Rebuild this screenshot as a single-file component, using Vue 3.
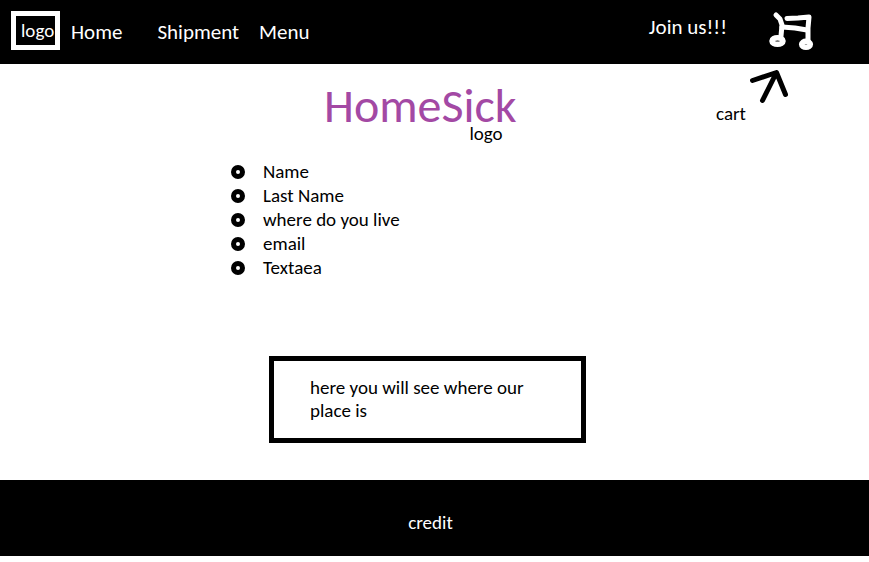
<script setup>
const links = ['Home', 'Shipment', 'Menu']
const fields = ['Name', 'Last Name', 'where do you live', 'email', 'Textaea']
</script>

<template>
  <div class="page">
    <header class="bar">
      <a class="brand" href="#">logo</a>
      <nav class="nav">
        <a v-for="link in links" :key="link" href="#" :class="link.toLowerCase()">{{ link }}</a>
      </nav>
      <a class="join" href="#join">Join us!!!</a>
      <a class="cart" href="#cart" aria-label="cart">
        <svg width="48" height="40" viewBox="0 0 48 40" fill="none" stroke="#fff" stroke-width="5" stroke-linecap="round" stroke-linejoin="round">
          <path d="M9 4 L13 8 L15 14 L14 25" />
          <path d="M20 7.5 L31 7 L42 6 L41 17 L41 29" />
          <path d="M15 16 L28 17 L40 19" />
          <ellipse cx="10.5" cy="30" rx="5.6" ry="3.3" stroke-width="5.4" />
          <ellipse cx="39" cy="33.3" rx="4.4" ry="3" stroke-width="5.4" />
        </svg>
      </a>
    </header>

    <main>
      <section class="hero">
        <div class="title">
          <h1>HomeSick</h1>
          <p>logo</p>
        </div>
        <div class="callout">
          <svg width="42" height="36" viewBox="0 0 42 36" fill="none" stroke="#000" stroke-width="5" stroke-linecap="round" stroke-linejoin="round">
            <path d="M4.5 12.5 L28.5 4.5 L14.5 32.5 M28.5 4.5 L37.5 26.5" />
          </svg>
          <span>cart</span>
        </div>
      </section>

      <ul class="fields">
        <li v-for="field in fields" :key="field">{{ field }}</li>
      </ul>

      <section class="place">
        <p>here you will see where our place is</p>
      </section>
    </main>

    <footer class="foot">credit</footer>
  </div>
</template>

<style>
body {
  margin: 0;
  background: #fff;
}
</style>

<style scoped>
.page {
  font-family: Calibri, Carlito, Lato, sans-serif;
  font-size: 19px;
  line-height: 24px;
  color: #000;
}

h1,
p,
ul {
  margin: 0;
  padding: 0;
}

a {
  color: #fff;
  text-decoration: none;
}

.bar {
  display: flex;
  align-items: flex-start;
  box-sizing: border-box;
  height: 64px;
  padding: 11px 54px 0 11px;
  background: #000;
  color: #fff;
}

.brand {
  box-sizing: border-box;
  width: 49px;
  height: 39px;
  padding: 3px 0 0 5px;
  border: 5px solid #fff;
}

.nav {
  display: flex;
  padding: 9px 0 0 11px;
  font-size: 21px;
}

.nav .shipment {
  margin: 0 20px 0 35px;
}

.join {
  margin: 4px 40px 0 auto;
  font-size: 21px;
}

.cart svg,
.callout svg {
  display: block;
}

.hero {
  display: flex;
  justify-content: space-between;
  padding: 4px 79px 4px 324px;
}

.title {
  padding-top: 19px;
}

h1 {
  font-size: 48px;
  font-weight: 400;
  line-height: 38px;
  color: #a349a4;
}

.title p {
  padding-right: 14px;
  line-height: 18px;
  text-align: right;
}

.callout {
  display: flex;
  flex-direction: column;
}

.callout span {
  align-self: flex-start;
  margin-left: -32px;
  line-height: 20px;
}

.fields {
  padding: 13px 0 0 231px;
  list-style: none;
}

.fields li {
  display: flex;
  align-items: center;
  gap: 18px;
}

.fields li::before {
  content: '';
  width: 4px;
  height: 4px;
  border: 5px solid #000;
  border-radius: 50%;
}

.place {
  box-sizing: border-box;
  width: 317px;
  margin: 76px auto 0 269px;
  padding: 15px 36px 16px;
  border: 5px solid #000;
  line-height: 23px;
}

.foot {
  margin-top: 37px;
  padding: 31px 8px 21px 0;
  background: #000;
  color: #fff;
  text-align: center;
}
</style>
